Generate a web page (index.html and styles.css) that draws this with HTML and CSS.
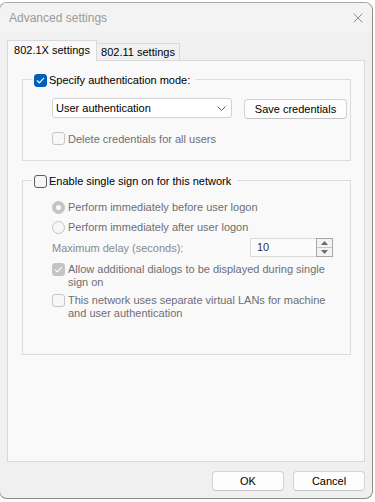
FILE: index.html
```html
<!DOCTYPE html>
<html>
<head>
<meta charset="utf-8">
<link rel="stylesheet" href="styles.css">
</head>
<body>
<div class="window">
  <div class="titlebar">
    <span class="title">Advanced settings</span>
    <svg class="close" width="10" height="10" viewBox="0 0 10 10"><path d="M0.5 0.5 L9.5 9.5 M9.5 0.5 L0.5 9.5" stroke="#8e8e8e" stroke-width="1" fill="none"/></svg>
  </div>
  <div class="content">
    <div class="tabs">
      <div class="tab active">802.1X settings</div>
      <div class="tab">802.11 settings</div>
    </div>
    <div class="panel">
      <div class="group g1">
        <div class="legend">
          <span class="cb checked"><svg width="11" height="11" viewBox="0 0 11 11"><path d="M2.3 5.8 L4.4 7.8 L8.6 3.4" stroke="#fff" stroke-width="1.2" fill="none" stroke-linecap="round" stroke-linejoin="round"/></svg></span>
          <span class="lbl">Specify authentication mode:</span>
        </div>
        <div class="combo-row">
          <div class="combo">
            <span>User authentication</span>
            <svg width="9" height="5" viewBox="0 0 9 5"><path d="M0.5 0.5 L4.5 4.5 L8.5 0.5" stroke="#5a5a5a" stroke-width="1" fill="none"/></svg>
          </div>
          <button class="btn save">Save credentials</button>
        </div>
        <div class="opt delete disabled">
          <span class="cb dis"></span>
          <span class="lbl">Delete credentials for all users</span>
        </div>
      </div>

      <div class="group g2">
        <div class="legend">
          <span class="cb"></span>
          <span class="lbl">Enable single sign on for this network</span>
        </div>
        <div class="opt radio-row r1 disabled">
          <span class="radio sel"></span>
          <span class="lbl">Perform immediately before user logon</span>
        </div>
        <div class="opt radio-row disabled">
          <span class="radio"></span>
          <span class="lbl">Perform immediately after user logon</span>
        </div>
        <div class="delay-row">
          <span class="lbl delay-lbl">Maximum delay (seconds):</span>
          <div class="spin">
            <span class="spin-val">10</span>
            <div class="spin-btns">
              <span class="spin-up"><svg width="7" height="4" viewBox="0 0 7 4"><path d="M0 4 L3.5 0 L7 4 Z" fill="#6a6a6a"/></svg></span>
              <span class="spin-down"><svg width="7" height="4" viewBox="0 0 7 4"><path d="M0 0 L3.5 4 L7 0 Z" fill="#6a6a6a"/></svg></span>
            </div>
          </div>
        </div>
        <div class="opt multi allow disabled">
          <span class="cb dis-checked"><svg width="11" height="11" viewBox="0 0 11 11"><path d="M2.3 5.8 L4.4 7.8 L8.6 3.4" stroke="#fff" stroke-width="1.1" fill="none" stroke-linecap="round" stroke-linejoin="round"/></svg></span>
          <span class="lbl">Allow additional dialogs to be displayed during single<br>sign on</span>
        </div>
        <div class="opt multi vlan disabled">
          <span class="cb dis"></span>
          <span class="lbl">This network uses separate virtual LANs for machine<br>and user authentication</span>
        </div>
      </div>
    </div>
    <div class="footer">
      <button class="btn">OK</button>
      <button class="btn">Cancel</button>
    </div>
  </div>
</div>
</body>
</html>
```

FILE: styles.css
```css
html, body {
  margin: 0;
  padding: 0;
  background: #ffffff;
}

body {
  font-family: "Liberation Sans", Arial, sans-serif;
  font-size: 11px;
  color: #000;
}

.window {
  box-sizing: border-box;
  width: 374px;
  height: 497px;
  margin: 2px 0 0 -1px;
  border: 1px solid #a8a8a8;
  border-right-color: #8c8c8c;
  border-bottom-color: #8c8c8c;
  border-radius: 8px;
  background: #f0f0f0;
  display: flex;
  flex-direction: column;
  overflow: hidden;
}

.titlebar {
  flex: none;
  height: 29px;
  display: flex;
  align-items: center;
  justify-content: space-between;
  padding: 0 9px 0 9px;
  background: #f3f3f3;
  color: #9a9a9a;
}

.title {
  font-size: 12px;
  line-height: 16px;
  margin-top: 1px;
}

.close {
  display: block;
}

.content {
  flex: 1;
  display: flex;
  flex-direction: column;
  padding: 8px 7px 0 7px;
}

.tabs {
  display: flex;
  align-items: flex-end;
  height: 21px;
  margin-bottom: -1px;
  position: relative;
  z-index: 1;
}

.tab {
  box-sizing: border-box;
  width: 84px;
  height: 17px;
  margin-bottom: 1px;
  border: 1px solid #d9d9d9;
  border-bottom: none;
  background: #f0f0f0;
  text-align: center;
  line-height: 17px;
  white-space: nowrap;
}

.tab.active {
  width: 90px;
  height: 21px;
  margin-bottom: 0;
  margin-right: -1px;
  background: #f9f9f9;
  line-height: 19px;
  position: relative;
  z-index: 1;
}

.panel {
  box-sizing: border-box;
  height: 402px;
  border: 1px solid #d9d9d9;
  background: #f9f9f9;
  padding: 18px 13px 0 14px;
  display: flex;
  flex-direction: column;
}

.group {
  box-sizing: border-box;
  border: 1px solid #dcdcdc;
  display: flex;
  flex-direction: column;
  padding-left: 29px;
}

.g1 {
  height: 82px;
}

.g2 {
  height: 175px;
  margin-top: 19px;
}

.legend {
  align-self: flex-start;
  display: flex;
  align-items: center;
  gap: 2px;
  height: 16px;
  margin: -8px 0 0 -20px;
  padding: 0 6px 0 2px;
  background: #f9f9f9;
}

.lbl {
  line-height: 16px;
  white-space: nowrap;
}

.cb {
  box-sizing: border-box;
  flex: none;
  width: 13px;
  height: 13px;
  border: 1px solid #5c5c5c;
  border-radius: 3px;
  background: #f6f6f6;
  display: flex;
  align-items: center;
  justify-content: center;
}

.cb svg {
  display: block;
}

.cb.checked {
  background: #005fb8;
  border-color: #005fb8;
}

.cb.dis {
  border-color: #c6c6c6;
  background: #f7f7f7;
}

.cb.dis-checked {
  border-color: #c4c4c4;
  background: #c4c4c4;
}

.radio {
  box-sizing: border-box;
  flex: none;
  width: 13px;
  height: 13px;
  border-radius: 50%;
  border: 1px solid #c4c4c4;
  background: #f7f7f7;
}

.radio.sel {
  border: 4px solid #c4c4c4;
  background: #fafafa;
}

.combo-row {
  display: flex;
  align-items: flex-start;
  gap: 12px;
  margin-top: 10px;
}

.combo {
  box-sizing: border-box;
  width: 180px;
  height: 20px;
  border: 1px solid #d3d3d3;
  border-radius: 3px;
  background: #ffffff;
  display: flex;
  align-items: center;
  justify-content: space-between;
  padding: 0 5px 0 3px;
}

.combo svg {
  display: block;
}

.btn {
  box-sizing: border-box;
  width: 72px;
  height: 20px;
  padding: 0;
  border: 1px solid #d3d3d3;
  border-bottom-color: #c4c4c4;
  border-radius: 4px;
  background: #fdfdfd;
  font-family: inherit;
  font-size: 11px;
  color: #000;
  line-height: 16px;
}

.btn.save {
  width: 103px;
  margin-top: 1px;
}

.opt {
  display: flex;
  align-items: center;
  gap: 3px;
}

.disabled {
  color: #6e6e74;
}

.delete {
  height: 13px;
  margin-top: 13px;
}

.radio-row {
  height: 20px;
}

.r1 {
  margin-top: 8px;
}

.delay-row {
  display: flex;
  align-items: center;
  height: 19px;
  margin-top: 1px;
}

.delay-lbl {
  color: #8a8a8a;
}

.spin {
  box-sizing: border-box;
  width: 83px;
  height: 19px;
  margin-left: auto;
  margin-right: 17px;
  border: 1px solid #dadada;
  background: #fbfbfb;
  display: flex;
  align-items: stretch;
}

.spin-val {
  flex: 1;
  padding-left: 6px;
  line-height: 17px;
  color: #333;
}

.spin-btns {
  box-sizing: border-box;
  width: 17px;
  margin: -1px -1px -1px 0;
  border: 1px solid #a8a8a8;
  display: flex;
  flex-direction: column;
  background: #f3f3f3;
}

.spin-up,
.spin-down {
  flex: 1;
  display: flex;
  align-items: center;
  justify-content: center;
}

.spin-up {
  border-bottom: 1px solid #c8c8c8;
}

.spin-up svg,
.spin-down svg {
  display: block;
}

.multi {
  align-items: flex-start;
}

.multi .lbl {
  line-height: 13px;
}

.allow {
  margin-top: 6px;
}

.vlan {
  margin-top: 5px;
}

.footer {
  display: flex;
  justify-content: flex-end;
  gap: 9px;
  padding-top: 9px;
}
```
